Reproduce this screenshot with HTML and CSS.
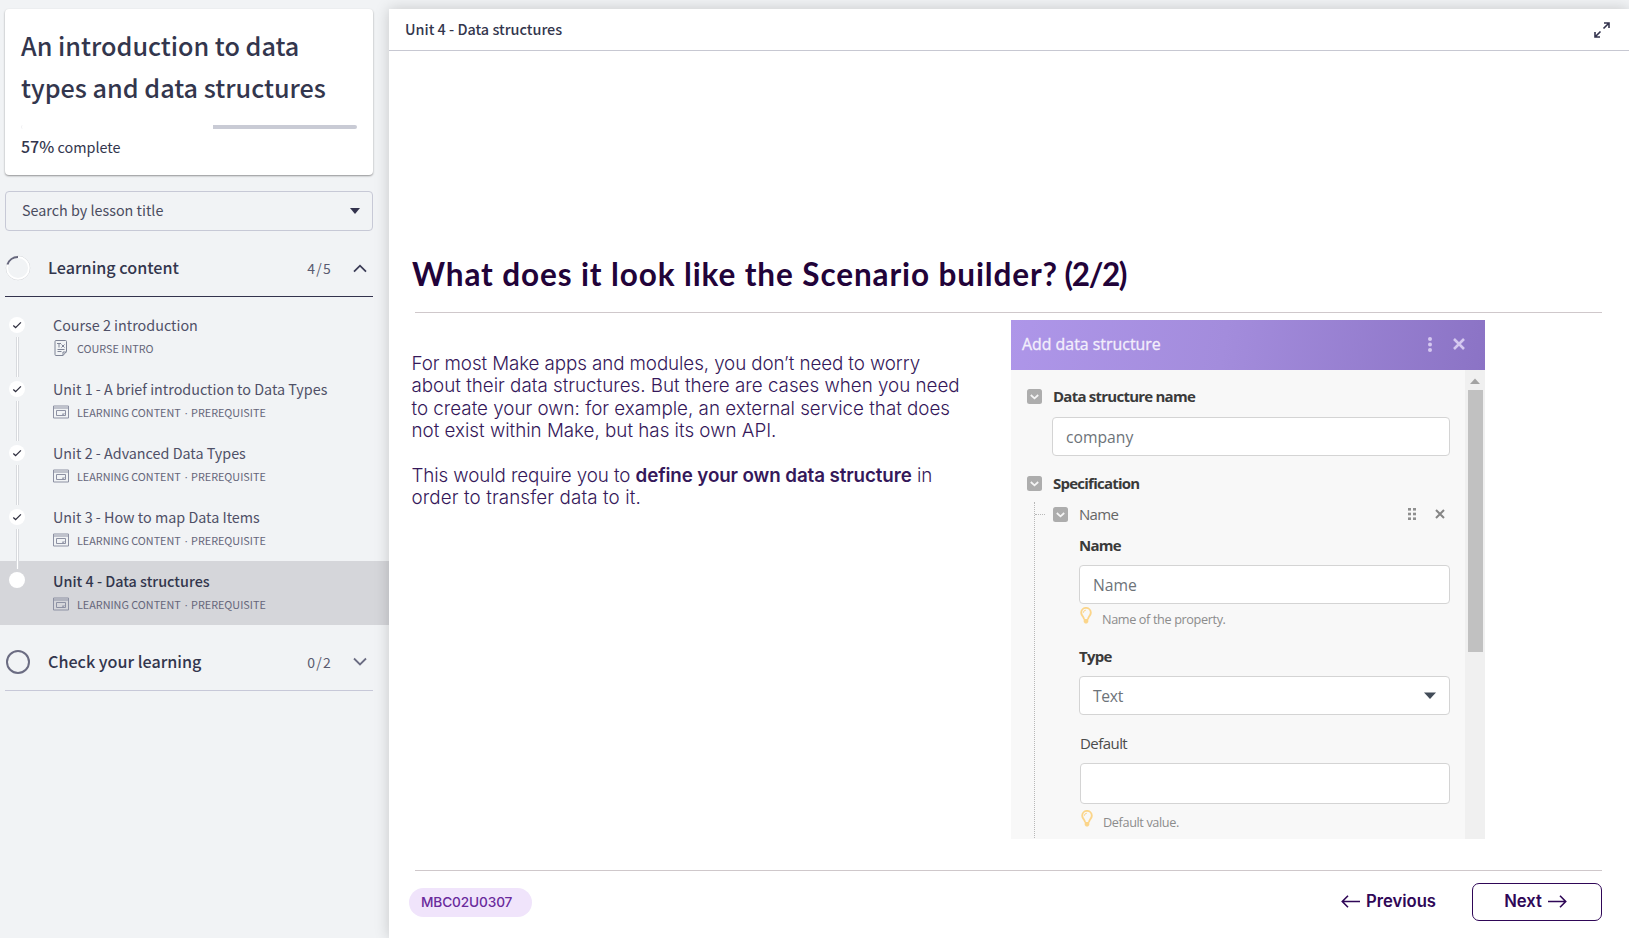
FILE: index.html
```
<!DOCTYPE html>
<html lang="en">
<head>
<meta charset="utf-8">
<title>Unit 4 - Data structures</title>
<link rel="stylesheet" href="styles.css">
</head>
<body>
<svg width="0" height="0" class="defs" aria-hidden="true">
  <symbol id="check" viewBox="0 0 16 16"><circle cx="8" cy="8" r="8" fill="#fff"/><path d="M4.3 8.6l2.3 2L11.9 5.400" fill="none" stroke="#2f2f3f" stroke-width="1.3"/></symbol>
  <symbol id="lesson" viewBox="0 0 16 14"><path d="M.5 1h15v12H.5zM.5 3h15M3.500 5.500h9v5h-9z" fill="none" stroke="#8d91a3"/><path d="M9.300 10.500v-2h3.200z" fill="#8d91a3"/></symbol>
  <symbol id="fold" viewBox="0 0 15 15"><rect width="15" height="15" rx="2.500" fill="#adadad"/><path d="M3.800 6l3.700 3.300L11.200 6" fill="none" stroke="#f5f5f5" stroke-width="1.800"/></symbol>
  <symbol id="bulb" viewBox="0 0 12 17"><path d="M4 12.200C4 9.800 1.200 8.600 1.200 5.700a4.800 4.800 0 0 1 9.600 0C10.800 8.600 8 9.800 8 12.200" fill="none" stroke="#fbd58a" stroke-width="1.900"/><path d="M3.300 5.800a2.700 2.700 0 0 1 2.600-2.600" fill="none" stroke="#fbd58a"/><path d="M3.700 12h4.600v3L7 16.500H5L3.700 15z" fill="#fbd58a"/></symbol>
</svg>
<div class="app">
  <aside class="sidebar">
    <section class="card">
      <h1 class="course">An introduction to data<br>types and data structures</h1>
      <div class="bar"><div class="bar-done"></div><div class="bar-left"></div></div>
      <p class="percent"><b>57%</b> complete</p>
    </section>
    <div class="search"><span>Search by lesson title</span><svg width="10" height="6"><path d="M0 0h10L5 6z" fill="#33334d"/></svg></div>
    <div class="group group-open">
      <svg width="26" height="26" viewBox="0 0 26 26"><circle cx="13" cy="13" r="11.800" fill="none" stroke="#c6c7cd" stroke-width=".7"/><circle cx="13" cy="13" r="10.900" fill="none" stroke="#fff" stroke-width="1.700"/><path d="M2.500 9.500A11 11 0 0 1 13 2" fill="none" stroke="#65667c" stroke-width="1.900"/></svg>
      <h2 class="group-name">Learning content</h2><span class="count">4/5</span>
      <svg width="14" height="9" viewBox="0 0 14 9"><path d="M1 7.700L7 1.700l6 6" fill="none" stroke="#3b3b55" stroke-width="1.800"/></svg>
    </div>
    <ul class="lessons">
      <li class="lesson"><div class="rail"><svg width="16" height="16"><use href="#check"/></svg><i class="link"></i></div>
        <div><div class="name">Course 2 introduction</div><div class="meta"><svg width="16" height="16" viewBox="0 0 16 16" fill="none" stroke="#7f8496"><path d="M4 .5h8.500q1 0 1 1v10l-3.500 4H3q-1 0-1-1V1.500q0-1 1-1zM10 15.500v-3.500h3.500M4.500 9.500h7M4.500 11.500h4M4 3.500h4M6 3.500v4M8.500 4.500l3 3M11.500 4.500l-3 3"/></svg><span>COURSE INTRO</span></div></div></li>
      <li class="lesson"><div class="rail"><svg width="16" height="16"><use href="#check"/></svg><i class="link"></i></div>
        <div><div class="name">Unit 1 - A brief introduction to Data Types</div><div class="meta"><svg width="16" height="14"><use href="#lesson"/></svg><span>LEARNING CONTENT<span class="dot">·</span>PREREQUISITE</span></div></div></li>
      <li class="lesson"><div class="rail"><svg width="16" height="16"><use href="#check"/></svg><i class="link"></i></div>
        <div><div class="name">Unit 2 - Advanced Data Types</div><div class="meta"><svg width="16" height="14"><use href="#lesson"/></svg><span>LEARNING CONTENT<span class="dot">·</span>PREREQUISITE</span></div></div></li>
      <li class="lesson before"><div class="rail"><svg width="16" height="16"><use href="#check"/></svg><i class="link"></i></div>
        <div><div class="name">Unit 3 - How to map Data Items</div><div class="meta"><svg width="16" height="14"><use href="#lesson"/></svg><span>LEARNING CONTENT<span class="dot">·</span>PREREQUISITE</span></div></div></li>
      <li class="lesson current"><div class="rail"><i class="here"></i></div>
        <div><div class="name">Unit 4 - Data structures</div><div class="meta"><svg width="16" height="14"><use href="#lesson"/></svg><span>LEARNING CONTENT<span class="dot">·</span>PREREQUISITE</span></div></div></li>
    </ul>
    <div class="group">
      <svg width="26" height="26" viewBox="0 0 26 26"><circle cx="13" cy="13" r="11" fill="none" stroke="#6b6c82" stroke-width="2"/></svg>
      <h2 class="group-name">Check your learning</h2><span class="count">0/2</span>
      <svg width="14" height="9" viewBox="0 0 14 9"><path d="M1 1.500l6 6 6-6" fill="none" stroke="#6b6c82" stroke-width="1.800"/></svg>
    </div>
  </aside>
  <main class="panel">
    <header class="topbar"><span>Unit 4 - Data structures</span>
      <svg width="16" height="16" viewBox="0 0 16 16" fill="none" stroke="#33334d" stroke-width="1.600"><path d="M9.500 6.500L15 1M10 1h5v5M6.500 9.500L1 15M1 10v5h5"/></svg></header>
    <div class="slide">
      <h2 class="headline">What does it look like the Scenario builder? <span class="part">(2/2)</span></h2>
      <div class="columns">
        <div class="copy">
          <p><span class="tight">For most Make apps and modules, you don’t need to worry</span><br>about their data structures. But there are cases when you need<br>to create your own: for example, an external service that does<br>not exist within Make, but has its own API.</p>
          <p><span class="tight">This would require you to </span><b>define your own data structure</b> in<br><span class="loose">order to transfer data to it.</span></p>
        </div>
        <div class="dialog">
          <div class="dialog-head"><span>Add data structure</span>
            <svg width="6" height="15" viewBox="0 0 6 15" fill="#d5c8f0"><circle cx="3" cy="2" r="2"/><circle cx="3" cy="7.500" r="2"/><circle cx="3" cy="13" r="2"/></svg>
            <svg width="12" height="12" viewBox="0 0 12 12"><path d="M1 1l10 10M11 1L1 11" stroke="#d5c8f0" stroke-width="2.600"/></svg></div>
          <div class="dialog-body">
            <div class="form">
              <div class="label strong"><svg width="15" height="15"><use href="#fold"/></svg><span>Data structure name</span></div>
              <div class="field">company</div>
              <div class="label strong spec"><svg width="15" height="15"><use href="#fold"/></svg><span>Specification</span></div>
              <div class="tree">
                <div class="label item"><i class="twig"></i><svg width="15" height="15"><use href="#fold"/></svg><span class="grow">Name</span>
                  <svg width="8" height="12" viewBox="0 0 8 12" fill="#8f8f8f"><rect width="3" height="2.600"/><rect x="5" width="3" height="2.600"/><rect y="4.700" width="3" height="2.600"/><rect x="5" y="4.700" width="3" height="2.600"/><rect y="9.400" width="3" height="2.600"/><rect x="5" y="9.400" width="3" height="2.600"/></svg>
                  <svg width="10" height="10" viewBox="0 0 10 10"><path d="M1 1l8 8M9 1L1 9" stroke="#858585" stroke-width="2"/></svg></div>
                <div class="sub">
                  <div class="label strong name-label"><span>Name</span></div>
                  <div class="field">Name</div>
                  <div class="hint"><svg width="12" height="17"><use href="#bulb"/></svg><span>Name of the property.</span></div>
                  <div class="label strong type-label"><span>Type</span></div>
                  <div class="field select"><span>Text</span><svg width="12" height="7"><path d="M0 .5h12L6 7z" fill="#424c58"/></svg></div>
                  <div class="label default-label"><span>Default</span></div>
                  <div class="field empty"></div>
                  <div class="hint last"><svg width="12" height="17"><use href="#bulb"/></svg><span>Default value.</span></div>
                </div>
              </div>
            </div>
            <div class="scroll"><svg width="10" height="6"><path d="M0 6L5 .5 10 6z" fill="#a3a3a3"/></svg><div class="thumb"></div></div>
          </div>
        </div>
      </div>
      <footer class="foot">
        <span class="code">MBC02U0307</span>
        <div class="prev"><svg width="19" height="13" viewBox="0 0 19 13"><path d="M19 6.500H1.500M7 .8L1.300 6.500 7 12.200" fill="none" stroke="#2f0757" stroke-width="1.600"/></svg><span>Previous</span></div>
        <div class="next"><span>Next</span><svg width="19" height="13" viewBox="0 0 19 13"><path d="M0 6.500h17.500M12 .8l5.700 5.700L12 12.200" fill="none" stroke="#2f0757" stroke-width="1.600"/></svg></div>
      </footer>
    </div>
  </main>
</div>
</body>
</html>
```

FILE: styles.css
```
* { box-sizing: border-box; }
body { margin: 0; background: #f1f3f5; overflow: hidden; font-family: "Noto Sans CJK SC", sans-serif; color: #33364d; }
svg { display: block; flex: none; }
.defs { position: absolute; }
h1, h2, p, ul { margin: 0; padding: 0; }
.app { display: flex; height: 938px; padding-top: 9px; }

/* Sidebar */
.sidebar { width: 389px; flex: none; }
.card { width: 368px; height: 166px; margin-left: 5px; padding: 15px 16px; background: #fff; border-radius: 4px; box-shadow: 0 1px 2px rgba(0,0,0,.4); }
.course { font-size: 25.2px; font-weight: 500; line-height: 42px; white-space: nowrap; }
.bar { display: flex; height: 4px; margin-top: 17px; }
.bar-done { width: 192px; border-left: 1px solid #f0f0f3; border-radius: 2px; }
.bar-left { flex: 1; background: #c9cbd5; border-radius: 0 2px 2px 0; }
.percent { margin-top: 5px; font-size: 14.4px; line-height: 24px; }
.percent b { font-size: 16px; font-weight: 500; }
.search { display: flex; justify-content: space-between; align-items: center; width: 368px; height: 40px; margin: 16px 0 0 5px; padding: 0 12px 1px 16px; border: 1px solid #c7c9d6; border-radius: 4px; font-size: 14.35px; color: #4a4c60; }
.search span { margin-top: -2px; }
.group { display: flex; align-items: center; width: 368px; height: 66px; margin-left: 5px; border-bottom: 1px solid #c7c8d8; padding-top: 8px; }
.group-open { border-color: #33334d; padding-top: 9px; }
.group-name { flex: 1; margin: -2px 0 0 17px; font-size: 16.15px; font-weight: 500; line-height: 24px; }
.count { margin-right: 21px; font-size: 14px; letter-spacing: 1.2px; color: #5a5b70; line-height: 24px; }
.group-open .count { margin-top: -1px; }
.group > svg:last-child { margin-right: 6px; }
.lessons { list-style: none; padding-top: 8px; }
.lesson { display: flex; height: 64px; padding: 8px 0 0 9px; }
.rail { width: 44px; padding-top: 4px; flex: none; }
.link { display: block; width: 3px; height: 40px; margin: 4px 0 0 7px; border: solid #d8dade; border-width: 0 1px; background: #fff; }
.before .link { height: 40px; }
.here { display: block; width: 16px; height: 16px; margin-top: -1px; border-radius: 50%; background: #fff; }
.name { height: 24px; font-size: 14.35px; line-height: 23px; color: #4f5067; white-space: nowrap; }
.meta { display: flex; align-items: center; gap: 8px; height: 22px; font-size: 10.8px; color: #65667a; white-space: nowrap; }
.dot { padding: 0 3.500px 0 4px; font-family: "Open Sans", sans-serif; }
.current { background: #d5d6da; }
.current .name { font-weight: 500; color: #33364d; }

/* Lesson panel */
.panel { position: relative; flex: 1; background: #fff; box-shadow: 0 0 14px rgba(0,0,0,.18); }
.topbar { display: flex; align-items: center; justify-content: space-between; height: 42px; padding: 0 19px 0 16px; border-bottom: 1px solid #c7c8d2; font-size: 14.4px; font-weight: 500; }
.topbar span { margin-top: -2px; }
.slide { padding: 202px 27px 0 23px; color: #2b0b50; }
.headline { height: 59px; margin-right: -20px; font: 700 31.5px/42px Lato, sans-serif; letter-spacing: .89px; color: #220339; white-space: nowrap; }
.part { margin-left: -2px; letter-spacing: -1.4px; }
.columns { display: flex; justify-content: space-between; margin-left: 3px; height: 559px; border: solid #cfc8cb; border-width: 1px 0; padding-top: 7px; }
.copy { margin: 33px 0 0 -3.500px; font: 300 18.770px/22.4px Inter, sans-serif; color: #35185a; white-space: nowrap; }
.copy p + p { margin-top: 22.4px; }
.copy b { font-weight: 600; letter-spacing: -.1px; }
.tight { letter-spacing: -.09px; }
.loose { letter-spacing: .12px; }

/* Dialog preview */
.dialog { width: 474px; height: 519px; margin-right: 117px; overflow: hidden; background: #f8f8f8; font: 15px "Open Sans", sans-serif; color: #4c4c4c; }
.dialog-head { display: flex; align-items: center; height: 50px; padding: 0 20px 2px 11px; background: linear-gradient(100deg, #ae96e9, #a38cdc 45%, #8b73c5); font-size: 15.9px; font-weight: 500; color: #f3effc; -webkit-text-stroke: .3px #f3effc; }
.dialog-head span { flex: 1; }
.dialog-head svg:last-child { margin-left: 20px; }
.dialog-body { display: flex; height: 469px; }
.form { flex: 1; padding: 14px 15px 0 16px; }
.label { display: flex; align-items: center; gap: 11px; height: 24px; letter-spacing: -.55px; white-space: nowrap; }
.label > span { margin-top: -1px; }
.strong { font-weight: 700; letter-spacing: -.76px; color: #3a3a3a; }
.field { display: flex; align-items: center; height: 39px; margin: 8.5px 0 0 25px; padding: 1px 13px 0; border: 1px solid #d4d4d4; border-radius: 4px; background: #fff; font-size: 15.700px; color: #6d7379; }
.spec { margin-top: 15.5px; }
.tree { height: 340px; margin: 7px 0 0 7px; border-left: 1px dotted #b8b8b8; }
.item { gap: 0; color: #666; }
.twig { width: 10px; margin-right: 8px; border-top: 1px dotted #b8b8b8; }
.label > .grow { flex: 1; margin-left: 11px; letter-spacing: -.7px; }
.item svg:last-child { margin: 0 5px 0 19px; }
.sub { margin-left: 44px; }
.sub .field { margin: 8px 0 0; }
.name-label { margin-top: 7px; }
.hint { display: flex; align-items: center; height: 20px; margin-top: 5px; padding-left: 1px; gap: 10px; font-size: 12.700px; letter-spacing: -.38px; color: #8c8c8c; }
.hint svg { margin-top: -7px; }
.hint span { margin-top: -1px; }
.type-label { margin-top: 15px; }
.select { justify-content: space-between; letter-spacing: -.3px; }
.select svg { margin-top: -2px; }
.default-label { margin: 16px 0 0 1px; }
.sub .empty { height: 41px; margin: 8px 0 0 1px; }
.last { margin: 8px 0 0 1px; }
.scroll { width: 20px; background: #f0f0f0; padding: 8px 2px 0 3px; }
.scroll svg { margin-left: 2px; }
.thumb { height: 262px; margin-top: 6px; background: #c1c1c1; }

/* Footer navigation */
.foot { display: flex; align-items: center; height: 62px; font: 600 16.650px Inter, sans-serif; color: #2f0757; }
.code { width: 123px; height: 29px; margin: 0 auto 0 -3px; padding-left: 12px; border-radius: 15px; background: #f0e4fb; font-size: 13.7px; font-weight: 500; letter-spacing: -.15px; line-height: 29px; color: #6a2a9c; }
.prev, .next { display: flex; align-items: center; gap: 6px; }
.prev { margin-top: -2px; }
.next { justify-content: center; width: 130px; height: 38px; margin-left: 36px; padding: 0 3px 2px 0; border: 1px solid #2f0757; border-radius: 7px; }
```
